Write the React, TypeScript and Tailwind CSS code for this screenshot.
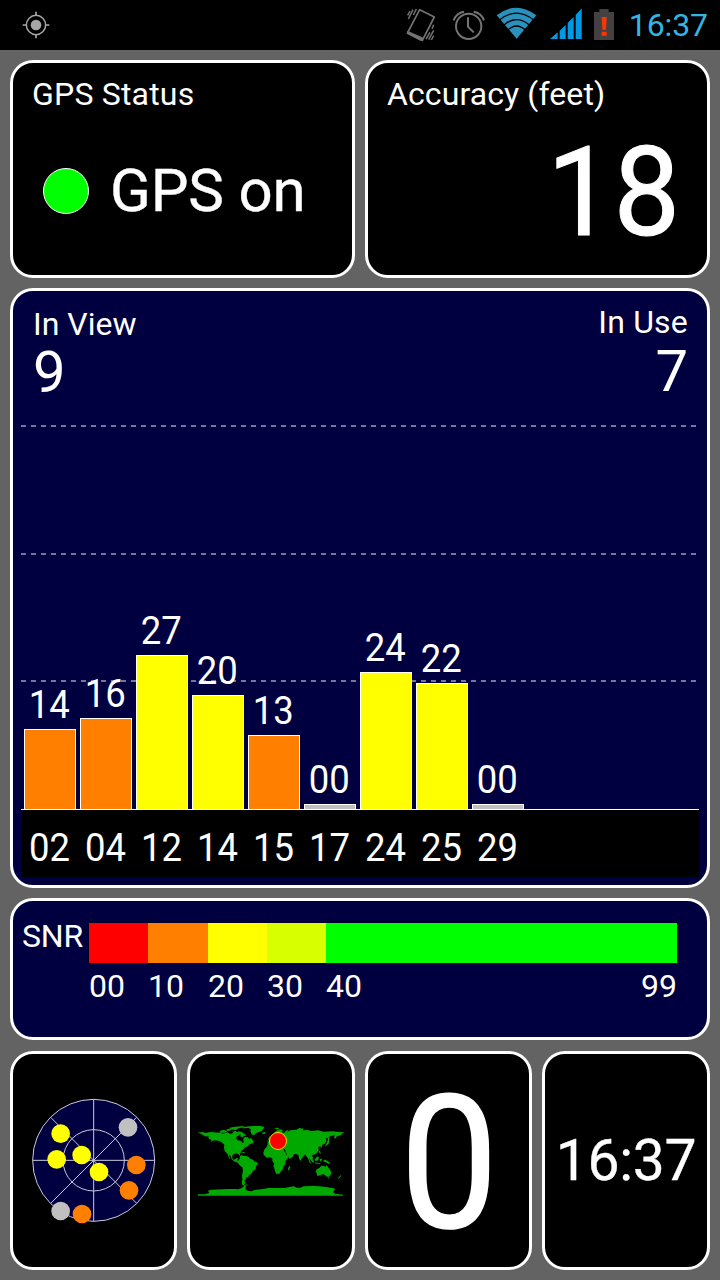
import React from "react";

type Satellite = { id: string; snr: string; height: number; fill: string };

const ORANGE = "bg-[#ff8000]";
const YELLOW = "bg-[#ffff00]";
const GRAY = "bg-[#c0c0c0]";

const satellites: Satellite[] = [
  { id: "02", snr: "14", height: 80, fill: ORANGE },
  { id: "04", snr: "16", height: 91, fill: ORANGE },
  { id: "12", snr: "27", height: 154, fill: YELLOW },
  { id: "14", snr: "20", height: 114, fill: YELLOW },
  { id: "15", snr: "13", height: 74, fill: ORANGE },
  { id: "17", snr: "00", height: 5, fill: GRAY },
  { id: "24", snr: "24", height: 137, fill: YELLOW },
  { id: "25", snr: "22", height: 126, fill: YELLOW },
  { id: "29", snr: "00", height: 5, fill: GRAY },
];

const scale = [
  { label: "00", fill: "bg-[#ff0000]", size: "w-[59px]" },
  { label: "10", fill: "bg-[#ff8000]", size: "w-[60px]" },
  { label: "20", fill: "bg-[#ffff00]", size: "w-[59px]" },
  { label: "30", fill: "bg-[#d8ff00]", size: "w-[59px]" },
  { label: "40", fill: "bg-[#00ff00]", size: "flex-1" },
];

const radarDots = [
  { x: 122, y: 131, c: "#ffff00" },
  { x: 110, y: 208, c: "#ffff00" },
  { x: 185, y: 195, c: "#ffff00" },
  { x: 237, y: 246, c: "#ffff00" },
  { x: 324, y: 112, c: "#c0c0c0" },
  { x: 349, y: 225, c: "#ff8000" },
  { x: 327, y: 301, c: "#ff8000" },
  { x: 122, y: 363, c: "#c0c0c0" },
  { x: 186, y: 372, c: "#ff8000" },
];

function Panel({ className = "", children }: { className?: string; children: React.ReactNode }) {
  return (
    <section className={`box-border rounded-[23px] border-[3px] border-white ${className}`}>{children}</section>
  );
}

function StatusBar() {
  return (
    <header className="flex h-[50px] shrink-0 items-center bg-black pl-[22px]">
      <svg className="h-7 w-7" viewBox="66 33 84 84" fill="none" stroke="#a6a6a6">
        <circle cx="108" cy="75" r="29" strokeWidth="4.5" />
        <circle cx="108" cy="75" r="16" fill="#a6a6a6" stroke="none" />
        <path strokeWidth="5" d="M108 35v12M108 103v12M68 75h12M136 75h12" />
      </svg>
      <div className="ml-auto flex h-[50px] items-center">
        <svg className="mr-[16px] h-[50px] w-[30px]" viewBox="18 0 90 150" fill="none" stroke="#747474">
          <path strokeWidth="5" strokeLinejoin="round" d="M59 29L103 51L67 121L23 98Z" />
          <path fill="#747474" stroke="none" d="M22 92L70 113L64 124L20 101Z" />
          <path strokeWidth="4.5" d="M49 27L40 45M39 29L25 57M30 33L23 46M101 74L96 86M101 91L86 119M101 107L94 120M90 97L78 117" />
        </svg>
        <svg className="mr-[10px] h-[50px] w-[34px]" viewBox="157 0 102 150" fill="none" stroke="#747474">
          <circle cx="207" cy="79" r="38" strokeWidth="6" />
          <path strokeWidth="6" d="M205 52v28l17 17M162 61Q170 39 193 35M253 61Q245 39 222 35" />
        </svg>
        <svg className="mr-[13px] h-[50px] w-[41px]" viewBox="288 0 123 150">
          <path fill="#2a91bd" d="M290 46Q349 0 409 46L350 116Z" />
          <g fill="none" stroke="#000" strokeWidth="4">
            <path d="M298 60Q349 19 401 60M311 76Q349 42 389 76M323 91Q349 65 377 91" />
          </g>
        </svg>
        <svg className="mr-[10px] h-[50px] w-[33px]" viewBox="451 0 99 150">
          <path fill="#0099e5" d="M451 117L474 97V117ZM480 92L498 75V117H480ZM504 69L522 51V117H504ZM528 45L546 25V117H528Z" />
        </svg>
        <svg className="mr-[14px] h-[50px] w-[22px]" viewBox="579 0 66 150">
          <path fill="#454042" d="M598 27h28v9h16v84h-60V36h16Z" />
          <path fill="#ff3400" d="M605 51h15l-2 38h-11ZM605 95h15v12h-15Z" />
        </svg>
        <time className="mr-[12px] text-[32px] leading-[50px] tracking-[-0.1px] text-[#33b5e5]">16:37</time>
      </div>
    </header>
  );
}

function SignalChart() {
  return (
    <Panel className="h-[600px] bg-[#000040] px-[8px]">
      <div className="relative h-[519px] border-b border-white">
        {[134, 262, 389].map((y) => (
          <div
            key={y}
            style={{ top: y }}
            className="absolute left-0 h-[2px] w-[677px] bg-[repeating-linear-gradient(90deg,#75759a_0px,#75759a_5px,transparent_5px,transparent_10px)]"
          />
        ))}
        <div className="absolute top-[17px] left-[11px] flex w-[656px] justify-between text-white">
          <div className="pl-[1px]">
            <div className="text-[32px] leading-[32px]">In View</div>
            <div className="mt-[3px] text-[58px] leading-[58px]">9</div>
          </div>
          <div className="-mt-[2px] text-right">
            <div className="text-[32px] leading-[32px] tracking-[0.2px]">In Use</div>
            <div className="mt-[4px] text-[58px] leading-[58px]">7</div>
          </div>
        </div>
        <div className="relative flex h-full items-end gap-[4px] pl-[3px]">
          {satellites.map((s) => (
            <div key={s.id} className="flex w-[52px] flex-col items-center">
              <div className="mr-[1px] mb-[5px] scale-x-[0.96] text-[38px] leading-[38px] text-white">{s.snr}</div>
              <div className={`w-full border border-b-0 border-white ${s.fill}`} style={{ height: s.height }} />
            </div>
          ))}
        </div>
      </div>
      <div className="flex h-[67px] gap-[4px] bg-black pt-[19px] pl-[3px]">
        {satellites.map((s) => (
          <div key={s.id} className="w-[52px] scale-x-[0.96] pr-[1px] text-center text-[38px] leading-[38px] text-white">
            {s.id}
          </div>
        ))}
      </div>
    </Panel>
  );
}

function SnrScale() {
  return (
    <Panel className="flex h-[142px] bg-[#000040] pt-[22px] pr-[30px] pl-[9px] text-[32px] leading-[32px] text-white">
      <div className="-mt-[3px] w-[67px] shrink-0 tracking-[-0.2px]">SNR</div>
      <div className="flex-1">
        <div className="flex h-[40px] shadow-[0_0_0_1px_#00002a]">
          {scale.map((s) => (
            <div key={s.label} className={`${s.size} ${s.fill}`} />
          ))}
        </div>
        <div className="mt-[7px] flex">
          {scale.map((s) => (
            <div key={s.label} className={s.size}>
              {s.label}
            </div>
          ))}
          <div>99</div>
        </div>
      </div>
    </Panel>
  );
}

function Radar() {
  return (
    <svg className="mt-[-1px] h-[140px] w-[150px] shrink-0" viewBox="0 0 450 420">
      <g fill="#000040" stroke="#c9c9dc" strokeWidth="3">
        <circle cx="221" cy="211" r="183" />
        <circle cx="221" cy="211" r="92" />
        <path d="M221 28V394M38 211H404M92 82L350 340M350 82L92 340" />
      </g>
      {radarDots.map((d) => (
        <circle key={`${d.x}-${d.y}`} cx={d.x} cy={d.y} r="28" fill={d.c} />
      ))}
    </svg>
  );
}

function WorldMap() {
  return (
    <svg className="-mt-[1px] mr-[2px] h-[100px] w-[160px] shrink-0" viewBox="0 0 480 300">
      <g fill="#00a800">
        <path d="M24 67h18l4 2 14-3 30 2 10 3 12-4 8 4 12-2 5-6 6 8 4-1 2 6-8 3-3 6 4 5 12 3 3 6 4-2-1-9 4-7 10 1 4 5 5-3 8 10-3 6-10 3-7 7-6 2-4 5-4 3-5 7-2 6 1 6-4-5-6-4-10 2-4 4 0 9 4 4 5-2 4-4 4 2-2 6 2 3 6 1 1 7 4 3 4-1 3 2-3 3-8-3-8-8-12-5-6-5-2-8-7-8 2 8 4 8-5-4-6-14-7-7-2-10 1-9-8-7-10-5-14-1-10 6 4-7-8-3-2-5 4-2-14-1Z" />
        <path d="M88 65l8-5 10 1 6 4-8 3-14 0ZM108 59l8-3 8 2-3 4-10 0ZM118 53l18-3 16-1 12-1-10 5-9 2-7 5-11-1-7-3ZM126 65l10-2 6 4 3-3 10 2 8 5 6 7-7-1-4 5-8-3 2-5-10-4-7 2Z" />
        <path d="M151 54l13-4 25-2 24 0 10 3-4 8-5 5-7 2-9 3-6 7-5-2-4-5-2-7 2-4-8-4-12 1-12-1Z" />
        <path d="M216 68l8-2 4 2-5 4-6-1ZM131 121l8-1 9 5 7 1-2 2-10-2-9-3ZM157 126l8 1-2 3-6-1Z" />
        <path d="M150 138l6-3 4 3 8-1 9 5 5 5 8 2 2 5 9 3 2 4-5 8-1 9-8 5-6 10-6 2-2 6-7 2-1 6-4 2 3 5-3 9 4 4-9-3-3-7 2-11-1-12 3-14-2-10-7-5-6-10 1-6 4-5Z" />
        <path d="M223 119l7-9 8-4 13-2 4 5 9 3 4-3 10 2 5 12 6 11 10 0-5 10-8 9 0 10-6 6-1 7-5 7-6 8-9 1-4-8-2-9-3-6 3-8-6-9 0-7-7-3-10 1-9-9-1-7Z" />
        <path d="M233 103l0-9 8-1-1-5 9-7 6 0 1-7-5 1 2-8 11-8 9-1 7 4-6 2 5 5 16-5 6-3 18-2 9-5 13 2-3 5 15-1 11 3 20-2 18 4 26-1 20 2 15 1-7 4-4 5-11 3-5 7-4-3 3-7-13 2-7 5-8 2 2 8-4 8-8 3-3 11-3-6-6 2 1 10-5 8-9 5-7 1 5 9-4 5-7-5 0 6 5 11-5-3-5-13-4-5-4-7-6 6-6 8-2 6-4-5-3-13-7-3-6 0-2 7-11 8-4-7-6-11-3-5-1-7-12 0-7-6-5 5-2-5-7-7-2 3 7 6-3 4-4-6-7-6-9 4-5 6Z" />
        <path d="M235 88l4-10 3 1-1 6 3 4-6 3-5-1ZM296 171l4-4 1 5-4 9-4-1ZM282 67l9-6 5-2-2 4-8 5ZM252 55l11-2 6 2-8 3ZM414 80l5 7-2 3 1 8-6 7-8 4 6-10 3-8Z" />
        <path d="M357 139l8 6 8 10-3 3-7-6-7-10ZM377 144l7-5 3 4-2 8-8 2-3-4ZM374 157l12 3 6 0-3 3-14-3ZM390 147l7-1-3 7-4 1ZM386 123l4 1 3 8-5-3ZM401 149l8 2 8 5 4 6-8-2-6-3-7-3Z" />
        <path d="M381 177l8-4 5-6 8 0 5 4 3-7 5 9 6 7 3 8-3 8-6 5-7-2-4-5-6-1-7 3-9 2-2-8-3-6ZM414 202l4 0-2 5ZM445 204l5-7 4-2-3 7-7 6Z" />
        <path d="M24 257v-4h20l14-4-4-7 8-3 54-2 20 0 8 1 10-3 10-8 8-6-5 9 0 9 8 4 10 1 8-4 25-3 18-3 29 0 20 0 12-3 15-2 8 4 12 0 8-4 30-1 20 1 22 3 16 2 8 3-7 9 6 5 24 3v3Z" />
      </g>
      <circle cx="264" cy="93" r="25.5" fill="#ff0000" stroke="#ffd000" strokeWidth="3" />
    </svg>
  );
}

export default function App() {
  return (
    <div className="flex h-[1280px] w-[720px] flex-col overflow-hidden bg-[#636363] font-[Roboto,sans-serif]">
      <StatusBar />
      <main className="flex flex-1 flex-col gap-[10px] p-[10px] text-white">
        <div className="grid h-[218px] grid-cols-2 gap-[10px]">
          <Panel className="bg-black pt-[15px] pl-[19px]">
            <h2 className="text-[32px] leading-[32px] tracking-[0.2px]">GPS Status</h2>
            <div className="mt-[51px] flex items-center pl-[11px]">
              <span className="h-[46px] w-[46px] rounded-full border-[1.5px] border-white bg-[#00ff00]" />
              <span className="ml-[21px] text-[60px] leading-[60px] tracking-[-0.2px] [-webkit-text-stroke:0.4px_white]">
                GPS on
              </span>
            </div>
          </Panel>
          <Panel className="bg-black pt-[15px] pr-[27px] pl-[19px]">
            <h2 className="text-[32px] leading-[32px] tracking-[0.1px]">Accuracy (feet)</h2>
            <div className="mt-[21px] origin-right scale-x-[0.955] text-right text-[124px] leading-[124px] [-webkit-text-stroke:1px_white]">
              18
            </div>
          </Panel>
        </div>
        <SignalChart />
        <SnrScale />
        <div className="mt-[1px] grid h-[219px] grid-cols-[167px_168px_167px_168px] gap-[10px]">
          <Panel className="flex items-center bg-black pl-[7px]">
            <Radar />
          </Panel>
          <Panel className="flex items-center justify-center bg-black">
            <WorldMap />
          </Panel>
          <Panel className="flex items-center justify-center bg-black pt-[4px] text-[186px] leading-[186px]">
            <span className="scale-x-[0.94] pl-[1px] [-webkit-text-stroke:1.5px_white]">0</span>
          </Panel>
          <Panel className="flex items-center justify-center bg-black text-[57px] leading-[57px] tracking-[-0.3px] [-webkit-text-stroke:0.3px_white]">
            16:37
          </Panel>
        </div>
      </main>
    </div>
  );
}
